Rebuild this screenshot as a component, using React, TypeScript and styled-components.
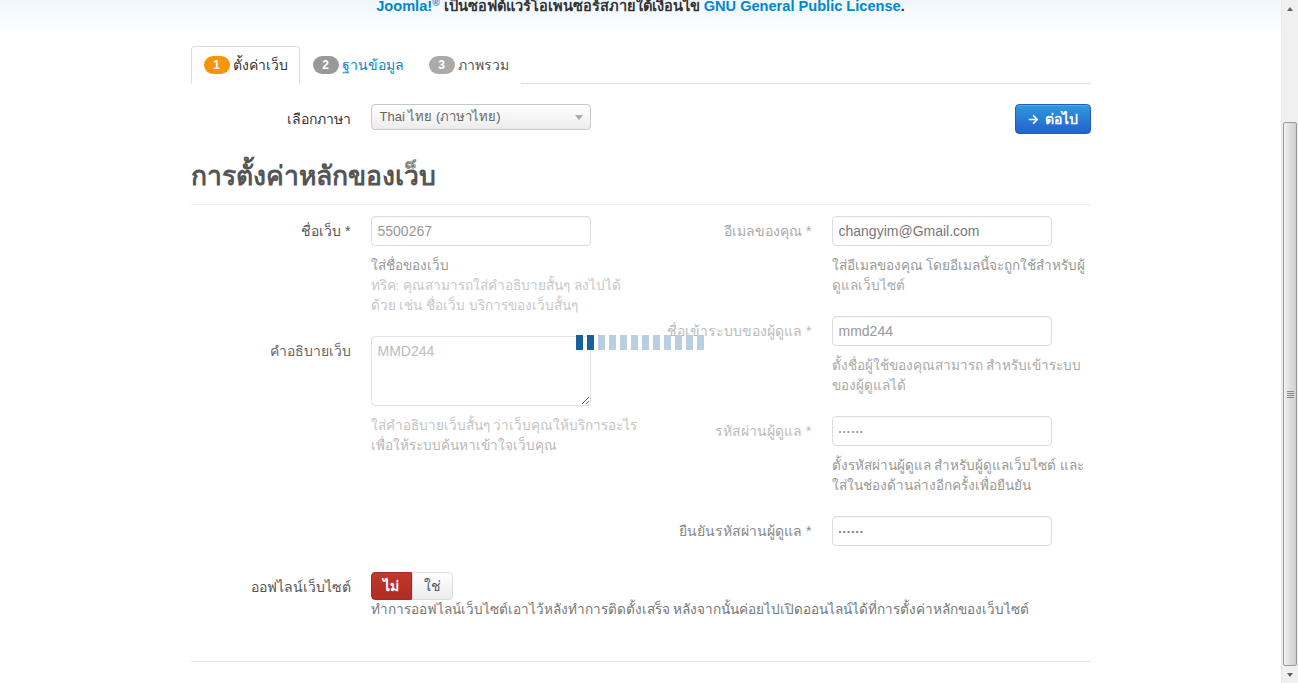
import styled, { createGlobalStyle } from "styled-components";
import { FaArrowRight } from "react-icons/fa";

const GlobalStyle = createGlobalStyle`
  html, body {
    margin: 0;
    padding: 0;
    overflow: hidden;
    background: #fff;
  }
  body {
    font-family: "Liberation Sans", Arial, "Noto Sans", sans-serif;
    font-size: 14px;
    line-height: 20px;
    color: #333;
  }
  * {
    box-sizing: border-box;
  }
`;

const App = () => {
  return (
    <>
      <GlobalStyle />
      <Viewport>
        <Page>
          <Header>
            <HeaderText>
              <HeaderLink>
                Joomla!<sup>®</sup>
              </HeaderLink>{" "}
              เป็นซอฟต์แวร์โอเพนซอร์สภายใต้เงื่อนไข{" "}
              <HeaderLink>GNU General Public License</HeaderLink>.
            </HeaderText>
          </Header>

          <Container>
            <Tabs>
              <Tab $active>
                <Badge $color="#f89406">1</Badge>
                <TabText $color="#333">ตั้งค่าเว็บ</TabText>
              </Tab>
              <Tab>
                <Badge $color="#999">2</Badge>
                <TabText $color="#0088cc">ฐานข้อมูล</TabText>
              </Tab>
              <Tab>
                <Badge $color="#aaa">3</Badge>
                <TabText $color="#555">ภาพรวม</TabText>
              </Tab>
            </Tabs>

            <LangRow>
              <Label $color="#333">เลือกภาษา</Label>
              <Select>
                <span>Thai ไทย (ภาษาไทย)</span>
                <SelectArrow />
              </Select>
              <Spacer />
              <PrimaryButton>
                <FaArrowRight size={11} />
                ต่อไป
              </PrimaryButton>
            </LangRow>

            <Heading>การตั้งค่าหลักของเว็บ</Heading>

            <FormGrid>
              <Column>
                <Group>
                  <Label $color="#555">ชื่อเว็บ *</Label>
                  <Controls>
                    <Input $color="#999" defaultValue="5500267" />
                    <Help>
                      <HelpLine $color="#999">ใส่ชื่อของเว็บ</HelpLine>
                      <HelpLine $color="#c8c8c8">
                        ทริค: คุณสามารถใส่คำอธิบายสั้นๆ ลงไปได้
                      </HelpLine>
                      <HelpLine $color="#c8c8c8">
                        ด้วย เช่น ชื่อเว็บ บริการของเว็บสั้นๆ
                      </HelpLine>
                    </Help>
                  </Controls>
                </Group>
                <Group>
                  <Label $color="#666">คำอธิบายเว็บ</Label>
                  <Controls>
                    <TextArea defaultValue="MMD244" />
                    <Help>
                      <HelpLine $color="#c4c4c4">
                        ใส่คำอธิบายเว็บสั้นๆ ว่าเว็บคุณให้บริการอะไร
                      </HelpLine>
                      <HelpLine $color="#b8b8b8">
                        เพื่อให้ระบบค้นหาเข้าใจเว็บคุณ
                      </HelpLine>
                    </Help>
                  </Controls>
                </Group>
              </Column>

              <Column>
                <Group>
                  <Label $color="#aaa">อีเมลของคุณ *</Label>
                  <Controls>
                    <Input $color="#777" defaultValue="changyim@Gmail.com" />
                    <Help>
                      <HelpLine $color="#999">
                        ใส่อีเมลของคุณ โดยอีเมลนี้จะถูกใช้สำหรับผู้
                      </HelpLine>
                      <HelpLine $color="#aaa">ดูแลเว็บไซต์</HelpLine>
                    </Help>
                  </Controls>
                </Group>
                <Group>
                  <Label $color="#bbb">ชื่อเข้าระบบของผู้ดูแล *</Label>
                  <Controls>
                    <Input $color="#999" defaultValue="mmd244" />
                    <Help>
                      <HelpLine $color="#aaa">
                        ตั้งชื่อผู้ใช้ของคุณสามารถ สำหรับเข้าระบบ
                      </HelpLine>
                      <HelpLine $color="#aaa">ของผู้ดูแลได้</HelpLine>
                    </Help>
                  </Controls>
                </Group>
                <Group>
                  <Label $color="#bbb">รหัสผ่านผู้ดูแล *</Label>
                  <Controls>
                    <Input $color="#999" $dots defaultValue="••••••" />
                    <Help>
                      <HelpLine $color="#999">
                        ตั้งรหัสผ่านผู้ดูแล สำหรับผู้ดูแลเว็บไซต์ และ
                      </HelpLine>
                      <HelpLine $color="#999">
                        ใส่ในช่องด้านล่างอีกครั้งเพื่อยืนยัน
                      </HelpLine>
                    </Help>
                  </Controls>
                </Group>
                <Group>
                  <Label $color="#888">ยืนยันรหัสผ่านผู้ดูแล *</Label>
                  <Controls>
                    <Input $color="#777" $dots defaultValue="••••••" />
                  </Controls>
                </Group>
              </Column>
            </FormGrid>

            <OfflineGroup>
              <Label $color="#555">ออฟไลน์เว็บไซต์</Label>
              <Controls>
                <Toggle>
                  <ToggleButton $active>ไม่</ToggleButton>
                  <ToggleButton>ใช่</ToggleButton>
                </Toggle>
                <HelpLine $color="#777">
                  ทำการออฟไลน์เว็บไซต์เอาไว้หลังทำการติดตั้งเสร็จ
                  หลังจากนั้นค่อยไปเปิดออนไลน์ได้ที่การตั้งค่าหลักของเว็บไซต์
                </HelpLine>
              </Controls>
            </OfflineGroup>

            <Divider />

            <Loader>
              {Array.from({ length: 12 }).map((_, i) => (
                <LoaderBar key={i} $on={i < 2} />
              ))}
            </Loader>
          </Container>
        </Page>

        <ScrollBar>
          <ScrollArrow>
            <ArrowGlyph $up />
          </ScrollArrow>
          <ScrollTrack>
            <ScrollThumb>
              <Grip />
            </ScrollThumb>
          </ScrollTrack>
          <ScrollArrow>
            <ArrowGlyph />
          </ScrollArrow>
        </ScrollBar>
      </Viewport>
    </>
  );
};

const Viewport = styled.div`
  display: flex;
  height: 683px;
  overflow: hidden;
`;

const Page = styled.main`
  flex: 1;
  min-width: 0;
  overflow: hidden;
`;

const Header = styled.header`
  height: 35px;
  background: linear-gradient(to bottom, #eef7fc, #ffffff);
  text-align: center;
`;

const HeaderText = styled.p`
  margin: 0;
  line-height: 12px;
  font-size: 14.6px;
  font-weight: bold;
  color: #333;
  white-space: nowrap;

  sup {
    font-size: 10px;
    line-height: 0;
    vertical-align: 5px;
  }
`;

const HeaderLink = styled.span`
  color: #0088cc;
`;

const Container = styled.div`
  position: relative;
  width: 900px;
  margin: 0 auto;
`;

const Tabs = styled.ul`
  display: flex;
  gap: 0;
  list-style: none;
  margin: 11px 0 0;
  padding: 0;
  border-bottom: 1px solid #ddd;
`;

const Tab = styled.li<{ $active?: boolean }>`
  display: flex;
  align-items: center;
  gap: 3px;
  padding: 8px 11px 8px 12px;
  line-height: 20px;
  margin-bottom: -1px;
  border: 1px solid ${(p) => (p.$active ? "#ddd" : "transparent")};
  border-bottom-color: ${(p) => (p.$active ? "#fff" : "transparent")};
  border-radius: 4px 4px 0 0;
  background: #fff;
`;

const Badge = styled.span<{ $color: string }>`
  display: inline-block;
  min-width: 26px;
  padding: 1px 9px;
  border-radius: 9px;
  background: ${(p) => p.$color};
  color: #fff;
  font-size: 12px;
  font-weight: bold;
  line-height: 16px;
  text-align: center;
`;

const TabText = styled.span<{ $color: string }>`
  color: ${(p) => p.$color};
  font-size: 14px;
`;

const LangRow = styled.div`
  display: flex;
  align-items: flex-start;
  margin-top: 20px;
`;

const Label = styled.label<{ $color: string }>`
  flex: 0 0 160px;
  width: 160px;
  padding-top: 5px;
  text-align: right;
  color: ${(p) => p.$color};
  font-size: 14px;
  line-height: 20px;
  white-space: nowrap;
`;

const Select = styled.div`
  position: relative;
  display: flex;
  align-items: center;
  width: 220px;
  height: 26px;
  margin-left: 20px;
  padding: 0 24px 0 8px;
  border: 1px solid #c8c8c8;
  border-radius: 4px;
  background: linear-gradient(to bottom, #ffffff, #ececec);
  color: #666;
  font-size: 13px;
`;

const SelectArrow = styled.span`
  position: absolute;
  right: 7px;
  top: 10px;
  border-left: 4px solid transparent;
  border-right: 4px solid transparent;
  border-top: 5px solid #aaa;
`;

const Spacer = styled.div`
  flex: 1;
`;

const PrimaryButton = styled.button`
  display: flex;
  align-items: center;
  gap: 6px;
  height: 30px;
  padding: 0 12px;
  border: 1px solid #1f5bc0;
  border-radius: 4px;
  background: linear-gradient(to bottom, #2c9bd9, #2560d0);
  color: #fff;
  font-family: inherit;
  font-size: 14px;
  font-weight: bold;
  box-shadow: inset 0 1px 0 rgba(255, 255, 255, 0.2);
`;

const Heading = styled.h3`
  margin: 22px 0 0;
  padding-bottom: 8px;
  border-bottom: 1px solid #eee;
  font-size: 26.5px;
  line-height: 40px;
  font-weight: bold;
  color: #555;
`;

const FormGrid = styled.div`
  display: grid;
  grid-template-columns: 440px 1fr;
  column-gap: 21px;
  margin-top: 11px;
`;

const Column = styled.div`
  display: flex;
  flex-direction: column;
  gap: 20px;
`;

const Group = styled.div`
  display: flex;
  align-items: flex-start;
`;

const Controls = styled.div`
  margin-left: 20px;
  min-width: 0;
`;

const Input = styled.input<{ $color: string; $dots?: boolean }>`
  display: block;
  width: 220px;
  height: 30px;
  padding: 4px 6px;
  border: 1px solid #ddd;
  border-radius: 4px;
  box-shadow: inset 0 1px 1px rgba(0, 0, 0, 0.04);
  color: ${(p) => p.$color};
  font-family: inherit;
  font-size: ${(p) => (p.$dots ? "8px" : "14px")};
  letter-spacing: ${(p) => (p.$dots ? "1.5px" : "normal")};
  outline: none;
`;

const TextArea = styled.textarea`
  display: block;
  width: 220px;
  height: 70px;
  padding: 4px 6px;
  border: 1px solid #e2e2e2;
  border-radius: 4px;
  color: #bbb;
  font-family: inherit;
  font-size: 14px;
  line-height: 20px;
  outline: none;
`;

const Help = styled.div`
  margin-top: 10px;
`;

const HelpLine = styled.div<{ $color: string }>`
  color: ${(p) => p.$color};
  font-size: 13.6px;
  line-height: 20px;
  white-space: nowrap;
`;

const OfflineGroup = styled.div`
  display: flex;
  align-items: flex-start;
  margin-top: 26px;
`;

const Toggle = styled.div`
  display: flex;
`;

const ToggleButton = styled.button<{ $active?: boolean }>`
  width: 41px;
  height: 28px;
  padding: 0;
  border: 1px solid ${(p) => (p.$active ? "#a52a22" : "#ddd")};
  border-radius: ${(p) => (p.$active ? "4px 0 0 4px" : "0 4px 4px 0")};
  background: ${(p) =>
    p.$active
      ? "linear-gradient(to bottom, #c0392f, #b22b22)"
      : "linear-gradient(to bottom, #ffffff, #ececec)"};
  color: ${(p) => (p.$active ? "#fff" : "#555")};
  font-family: inherit;
  font-size: 14px;
  font-weight: ${(p) => (p.$active ? "bold" : "normal")};
`;

const Divider = styled.hr`
  margin: 41px 0 0;
  border: 0;
  border-top: 1px solid #e5e5e5;
`;

const Loader = styled.div`
  position: absolute;
  left: 385px;
  top: 289px;
  display: flex;
  gap: 4px;
`;

const LoaderBar = styled.span<{ $on: boolean }>`
  width: 7px;
  height: 15px;
  background: ${(p) => (p.$on ? "#19609c" : "#b9cfe1")};
`;

const ScrollBar = styled.aside`
  flex: 0 0 17px;
  display: flex;
  flex-direction: column;
  background: #f0f0f0;
  border-left: 1px solid #e8e8e8;
`;

const ScrollArrow = styled.div`
  display: flex;
  align-items: center;
  justify-content: center;
  height: 17px;
`;

const ArrowGlyph = styled.span<{ $up?: boolean }>`
  border-left: 3px solid transparent;
  border-right: 3px solid transparent;
  ${(p) =>
    p.$up ? "border-bottom: 4px solid #606060;" : "border-top: 4px solid #606060;"}
`;

const ScrollTrack = styled.div`
  flex: 1;
  display: flex;
  flex-direction: column;
  justify-content: flex-end;
`;

const ScrollThumb = styled.div`
  display: flex;
  align-items: center;
  justify-content: center;
  height: 544px;
  margin: 0 1px;
  border: 1px solid #979797;
  border-radius: 2px;
  background: linear-gradient(to right, #f2f2f2, #e0e0e0 45%, #cfcfcf);
`;

const Grip = styled.span`
  width: 7px;
  height: 7px;
  background: repeating-linear-gradient(
    to bottom,
    #8a8a8a 0,
    #8a8a8a 1px,
    transparent 1px,
    transparent 2px
  );
`;

export default App;
